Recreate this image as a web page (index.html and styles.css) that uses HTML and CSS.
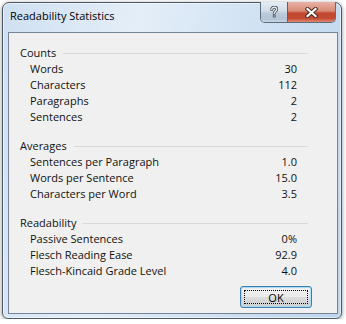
FILE: index.html
```html
<!DOCTYPE html>
<html>
<head>
<meta charset="utf-8">
<link rel="stylesheet" href="styles.css">
</head>
<body>
<div class="window">
  <div class="titlebar">
    <span class="title">Readability Statistics</span>
    <div class="caption-btns">
      <div class="cbtn help">
        <svg width="8" height="12" viewBox="0 0 10 15">
          <path d="M2.2 4.6 C2.2 2.4 3.8 1.4 5.3 1.4 C7.3 1.4 8.4 2.7 8.4 4.2 C8.4 6.6 5.3 6.6 5.3 9.4" fill="none" stroke="#3b4552" stroke-width="3.6" stroke-linecap="round"/>
          <circle cx="5.3" cy="12.6" r="1.9" fill="#3b4552"/>
          <path d="M2.2 4.6 C2.2 2.4 3.8 1.4 5.3 1.4 C7.3 1.4 8.4 2.7 8.4 4.2 C8.4 6.6 5.3 6.6 5.3 9.4" fill="none" stroke="#eef1f5" stroke-width="1.7" stroke-linecap="round"/>
          <circle cx="5.3" cy="12.6" r="0.9" fill="#eef1f5"/>
        </svg>
      </div>
      <div class="cbtn close">
        <svg width="13" height="11" viewBox="0 0 13 11">
          <path d="M2.5 2 L10.5 9 M10.5 2 L2.5 9" stroke="#4a2a25" stroke-width="4.2" stroke-linecap="square"/>
          <path d="M2.5 2 L10.5 9 M10.5 2 L2.5 9" stroke="#ffffff" stroke-width="2.2" stroke-linecap="square"/>
        </svg>
      </div>
    </div>
  </div>
  <div class="client">
    <section class="group">
      <div class="group-head"><span>Counts</span><span class="rule"></span></div>
      <div class="row"><span>Words</span><span>30</span></div>
      <div class="row"><span>Characters</span><span>112</span></div>
      <div class="row"><span>Paragraphs</span><span>2</span></div>
      <div class="row"><span>Sentences</span><span>2</span></div>
    </section>
    <section class="group">
      <div class="group-head"><span>Averages</span><span class="rule"></span></div>
      <div class="row"><span>Sentences per Paragraph</span><span>1.0</span></div>
      <div class="row"><span>Words per Sentence</span><span>15.0</span></div>
      <div class="row"><span>Characters per Word</span><span>3.5</span></div>
    </section>
    <section class="group">
      <div class="group-head"><span>Readability</span><span class="rule"></span></div>
      <div class="row"><span>Passive Sentences</span><span>0%</span></div>
      <div class="row"><span>Flesch Reading Ease</span><span>92.9</span></div>
      <div class="row"><span>Flesch-Kincaid Grade Level</span><span>4.0</span></div>
    </section>
    <div class="footer"><button class="ok">OK</button></div>
  </div>
</div>
</body>
</html>
```

FILE: styles.css
```css
* { box-sizing: border-box; }
html, body { margin: 0; padding: 0; background: #ffffff; }
body { font-family: "Open Sans", "Noto Sans", sans-serif; font-size: 11px; color: #111; }

.window {
  margin: 2px 0 0 2px;
  width: 340px;
  height: 317px;
  border: 1px solid #4f5966;
  border-radius: 7px 7px 6px 6px;
  background: linear-gradient(100deg, #cfe0f2 0%, #e4eef8 35%, #d4e4f4 60%, #bdd5ee 100%);
  box-shadow: 0 1px 4px rgba(0,0,0,0.45), inset 0 0 0 1px rgba(255,255,255,0.55);
  display: flex;
  flex-direction: column;
  padding: 0 3px 4px 5px;
}

.titlebar {
  height: 29px;
  display: flex;
  justify-content: space-between;
  align-items: flex-start;
  margin-left: -5px;
  margin-right: -3px;
}
.title {
  padding: 5px 0 0 7px;
  line-height: 16px;
  color: #000;
}
.caption-btns {
  display: flex;
  margin-top: -1px;
  margin-right: 5px;
  border: 1px solid #5e6b7a;
  border-top: none;
  border-radius: 0 0 5px 5px;
  overflow: hidden;
}
.cbtn {
  height: 20px;
  display: flex;
  align-items: center;
  justify-content: center;
}
.help {
  width: 27px;
  background: linear-gradient(#e4ebf3 0%, #d3dde8 45%, #bccbdb 55%, #b4c4d5 85%, #c9d6e3 100%);
  border-right: 1px solid #6f5a58;
}
.close {
  width: 47px;
  background: linear-gradient(#e9b3a7 0%, #d98a79 45%, #c34730 55%, #c24a33 82%, #de8a70 100%);
}

.client {
  height: 282px;
  background: #f0f0f0;
  border: 1px solid #74859a;
  padding: 12px 25px 5px 11px;
  display: flex;
  flex-direction: column;
  gap: 13px;
}
.group {
  padding-right: 4px;
  line-height: 16px;
}
.group-head {
  display: flex;
  align-items: center;
}
.rule {
  flex: 1;
  height: 1px;
  margin-left: 7px;
  background: #d8d8d8;
}
.row {
  display: flex;
  justify-content: space-between;
  padding: 0 11px 0 10px;
}

.footer {
  display: flex;
  justify-content: flex-end;
  margin-top: -6px;
}
.ok {
  position: relative;
  width: 72px;
  height: 22px;
  padding: 0;
  font-family: inherit;
  font-size: 11px;
  color: #000;
  border: 1px solid #3c7fb1;
  border-radius: 3px;
  background: linear-gradient(#f2f2f2 0%, #ebebeb 48%, #dddddd 52%, #cfcfcf 100%);
  box-shadow: inset 0 0 0 1px #a9dcf3;
}
.ok::after {
  content: "";
  position: absolute;
  left: 3px; top: 3px; right: 3px; bottom: 3px;
  border: 1px dotted #000;
}
```
